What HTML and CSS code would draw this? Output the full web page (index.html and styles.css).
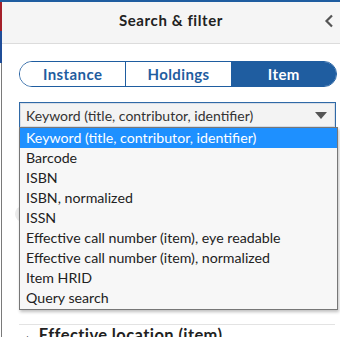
FILE: index.html
```html
<!DOCTYPE html>
<html>
<head>
<meta charset="UTF-8">
<title>Search &amp; filter</title>
<link rel="stylesheet" href="styles.css">
</head>
<body>
<div class="app">
	<div class="edge">
		<div class="edge-red"></div>
		<div class="edge-blue"></div>
		<div class="edge-line"></div>
	</div>
	<section class="pane">
		<header class="paneHeader">
			<h2 class="title">Search &amp; filter</h2>
			<span class="collapse">
				<svg width="10" height="14" viewBox="0 0 10 14"><path d="M8 1.5 L2.5 7 L8 12.5" fill="none" stroke="#555" stroke-width="2.2"/></svg>
			</span>
		</header>
		<div class="paneBody">
			<div class="segments">
				<button class="seg">Instance</button>
				<button class="seg">Holdings</button>
				<button class="seg active">Item</button>
			</div>
			<div class="selectWrap">
				<div class="select">
					<span>Keyword (title, contributor, identifier)</span>
					<svg width="12" height="7" viewBox="0 0 12 7"><path d="M0 0 H12 L6 7 Z" fill="#555"/></svg>
				</div>
				<ul class="options">
					<li class="selected">Keyword (title, contributor, identifier)</li>
					<li>Barcode</li>
					<li>ISBN</li>
					<li>ISBN, normalized</li>
					<li>ISSN</li>
					<li>Effective call number (item), eye readable</li>
					<li>Effective call number (item), normalized</li>
					<li>Item HRID</li>
					<li>Query search</li>
				</ul>
			</div>
			<div class="hidden">
				<div class="ghost"></div>
			</div>
			<div class="accordion">
				<span class="caret">&#9650;</span> Effective location (item)
			</div>
		</div>
	</section>
</div>
</body>
</html>
```

FILE: styles.css
```css
* {
	margin: 0px;
	padding: 0px;
	box-sizing: border-box;
}

body {
	font-family: 'Lato', sans-serif;
	background: #ffffff;
	color: #333;
	overflow: hidden;
}

.app {
	display: flex;
	height: 337px;
	border-top: 2px solid #1f5da0;
}

.edge {
	width: 2px;
	display: flex;
	flex-direction: column;
}

.edge-red {
	height: 29px;
	background: #a4202a;
}

.edge-blue {
	height: 32px;
	background: #1f4d98;
}

.edge-line {
	flex: 1;
	border-right: 1px solid #7a7a7a;
}

.pane {
	flex: 1;
}

.paneHeader {
	height: 42px;
	padding-bottom: 5px;
	background: #f5f5f5;
	border-bottom: 1px solid #dcdcdc;
	display: flex;
	align-items: center;
	justify-content: center;
	position: relative;
}

.title {
	font-size: 15px;
	font-weight: bold;
	color: #222;
	letter-spacing: 0.6px;
}

.collapse {
	position: absolute;
	right: 6px;
	top: 10px;
}

.paneBody {
	padding: 17px 3px 0 17px;
}

.segments {
	display: grid;
	grid-template-columns: 1fr 1fr 1fr;
	height: 26px;
	border: 1px solid #1f5da0;
	border-radius: 13px;
	overflow: hidden;
}

.seg {
	font-family: 'Lato', sans-serif;
	font-size: 15px;
	font-weight: bold;
	color: #1f5da0;
	background: #fff;
	border: none;
	border-left: 1px solid #1f5da0;
	letter-spacing: 0.4px;
}

.seg:first-child {
	border-left: none;
}

.seg.active {
	background: #1f5da0;
	color: #fff;
}

.selectWrap {
	position: relative;
	margin-top: 15px;
	margin-right: 1px;
}

.select {
	height: 26px;
	border: 1px solid #2f69a6;
	box-shadow: inset 0 0 0 1px #d7dde6;
	background: #f3f3f3;
	display: flex;
	align-items: center;
	justify-content: space-between;
	padding: 0 8px 0 6px;
	font-size: 14px;
	color: #333;
}

.options {
	position: absolute;
	top: 25px;
	left: 0;
	right: -2px;
	list-style: none;
	background: #f7f7f7;
	border: 1px solid #777;
	box-shadow: 1px 2px 3px rgba(0, 0, 0, 0.25);
	z-index: 2;
	padding-bottom: 1px;
}

.options li {
	height: 20px;
	line-height: 20px;
	padding-left: 6px;
	font-size: 14.2px;
	color: #222;
	white-space: nowrap;
}

.options li.selected {
	background: #1e90ff;
	color: #fff;
}

.hidden {
	height: 196px;
	position: relative;
}

.ghost {
	position: absolute;
	left: -4px;
	top: 78px;
	width: 20px;
	height: 16px;
	border-radius: 8px;
	background: #ececec;
}

.accordion {
	border-top: 1px solid #e3e3e3;
	padding: 0 0 0 4px;
	font-size: 16.5px;
	font-weight: bold;
	color: #222;
	margin-right: 2px;
	letter-spacing: 0.4px;
}

.caret {
	font-size: 9px;
	color: #333;
	margin-right: 2px;
}
```
